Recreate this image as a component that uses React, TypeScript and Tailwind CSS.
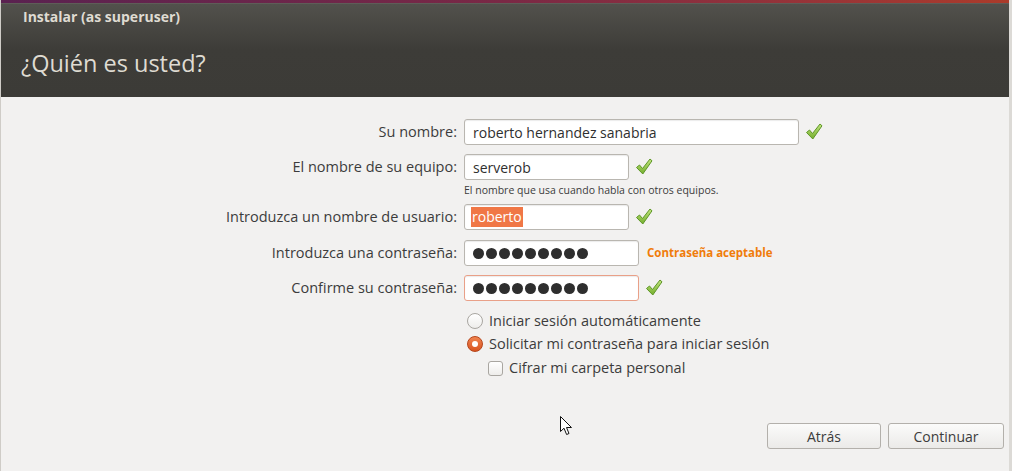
import React from 'react';

const FONT = { fontFamily: '"Open Sans", "Noto Sans", sans-serif' };

function Check() {
  return (
    <svg width="18" height="18" viewBox="0 0 18 18" className="shrink-0">
      <defs>
        <linearGradient id="chk" x1="0" y1="0" x2="0" y2="1">
          <stop offset="0" stopColor="#c3e67f" />
          <stop offset="1" stopColor="#73ad2c" />
        </linearGradient>
      </defs>
      <path
        d="M1.5 9.5 L4.5 7 L7.5 10.5 L15 1 L17 2.8 L7.8 16 Z"
        fill="url(#chk)"
        stroke="#5e9626"
        strokeWidth="1"
        strokeLinejoin="round"
      />
    </svg>
  );
}

function Dots() {
  return (
    <div className="flex gap-[2px]">
      {Array.from({ length: 9 }).map((_, i) => (
        <span key={i} className="w-[11px] h-[11px] rounded-full bg-[#2e2e2e]" />
      ))}
    </div>
  );
}

function Field({
  label,
  width,
  border = 'border-[#b9b6b0]',
  children,
  after,
}: {
  label: string;
  width: string;
  border?: string;
  children: React.ReactNode;
  after?: React.ReactNode;
}) {
  return (
    <div className="flex items-center h-[26px]">
      <div className="w-[463px] pr-[7px] text-right text-[14.5px] text-[#3c3c3c]">{label}</div>
      <div
        className={`${width} h-[26px] flex items-center pl-[8px] bg-white rounded-[3px] border ${border} shadow-[inset_0_1px_1px_rgba(0,0,0,0.08)] text-[14px] text-[#2f2f2f]`}
      >
        {children}
      </div>
      {after}
    </div>
  );
}

function Cursor() {
  return (
    <svg width="13" height="20" viewBox="0 0 13 20" className="absolute left-[560px] top-[416px]">
      <path d="M0.5 0.5 L0.5 15.5 L4 12.2 L6.6 18.5 L9 17.5 L6.5 11.5 L11.5 11.5 Z" fill="#fff" stroke="#111" strokeWidth="1" strokeLinejoin="round" />
    </svg>
  );
}

const ok = <div className="ml-[6px]"><Check /></div>;

export default function App() {
  return (
    <div className="relative w-[1012px] h-[471px] flex bg-[#dcdad6] overflow-hidden" style={FONT}>
      <div className="w-[1009px] h-full flex flex-col bg-[#f2f1f0] border-l border-[#cfccc7]">
        <div className="h-[3px] bg-gradient-to-r from-[#5a2150] via-[#7a2845] to-[#ab3b2a]" />
        <div className="h-[94px] bg-gradient-to-b from-[#52514c] via-[#3d3c38] to-[#3c3b37] border-t border-[#5e5d58]">
          <div className="pl-[22px] pt-[2px] text-[14px] font-bold text-[#dfdbd2]">Instalar (as superuser)</div>
          <div className="pl-[20px] pt-[19px] text-[23.5px] text-[#dfdbd2]">¿Quién es usted?</div>
        </div>

        <div className="pt-[22px] flex flex-col">
          <Field label="Su nombre:" width="w-[335px]" after={ok}>
            roberto hernandez sanabria
          </Field>
          <div className="mt-[9px]">
            <Field label="El nombre de su equipo:" width="w-[165px]" after={ok}>
              serverob
            </Field>
          </div>
          <div className="pl-[463px] mt-[3px] h-[15px] text-[10.5px] leading-[15px] text-[#3c3c3c]">
            El nombre que usa cuando habla con otros equipos.
          </div>
          <div className="mt-[6px]">
            <Field label="Introduzca un nombre de usuario:" width="w-[165px]" after={ok}>
              <span className="bg-[#f07746] text-white px-[1px] -ml-[2px] leading-[20px]">roberto</span>
            </Field>
          </div>
          <div className="mt-[10px]">
            <Field
              label="Introduzca una contraseña:"
              width="w-[175px]"
              after={<span className="ml-[8px] text-[11.5px] font-bold text-[#f07c0a]">Contraseña aceptable</span>}
            >
              <Dots />
            </Field>
          </div>
          <div className="mt-[9px]">
            <Field label="Confirme su contraseña:" width="w-[175px]" border="border-[#e9a088]" after={ok}>
              <Dots />
            </Field>
          </div>

          <div className="pl-[466px] mt-[8px] flex flex-col text-[14.5px] text-[#3c3c3c]">
            <div className="flex items-center h-[24px] gap-[6px]">
              <span className="w-[16px] h-[16px] rounded-full border border-[#a9a6a1] bg-gradient-to-b from-white to-[#eeedeb]" />
              <span>Iniciar sesión automáticamente</span>
            </div>
            <div className="flex items-center h-[22px] gap-[6px]">
              <span className="w-[16px] h-[16px] rounded-full border border-[#b5451b] bg-gradient-to-b from-[#f0834e] to-[#d9531e] flex items-center justify-center">
                <span className="w-[6px] h-[6px] rounded-full bg-white" />
              </span>
              <span>Solicitar mi contraseña para iniciar sesión</span>
            </div>
            <div className="flex items-center h-[24px] mt-[1px] gap-[6px] pl-[21px]">
              <span className="w-[15px] h-[15px] rounded-[3px] border border-[#a9a6a1] bg-gradient-to-b from-white to-[#eeedeb]" />
              <span>Cifrar mi carpeta personal</span>
            </div>
          </div>

          <div className="flex justify-end gap-[7px] pr-[5px] mt-[43px]">
            <button className="w-[114px] h-[26px] rounded-[3px] border border-[#b3b0ab] bg-gradient-to-b from-[#fbfbfa] to-[#ebeae8] text-[14px] text-[#3c3c3c]">
              Atrás
            </button>
            <button className="w-[116px] h-[26px] rounded-[3px] border border-[#b3b0ab] bg-gradient-to-b from-[#fbfbfa] to-[#ebeae8] text-[14px] text-[#3c3c3c]">
              Continuar
            </button>
          </div>
        </div>
      </div>
      <Cursor />
    </div>
  );
}
